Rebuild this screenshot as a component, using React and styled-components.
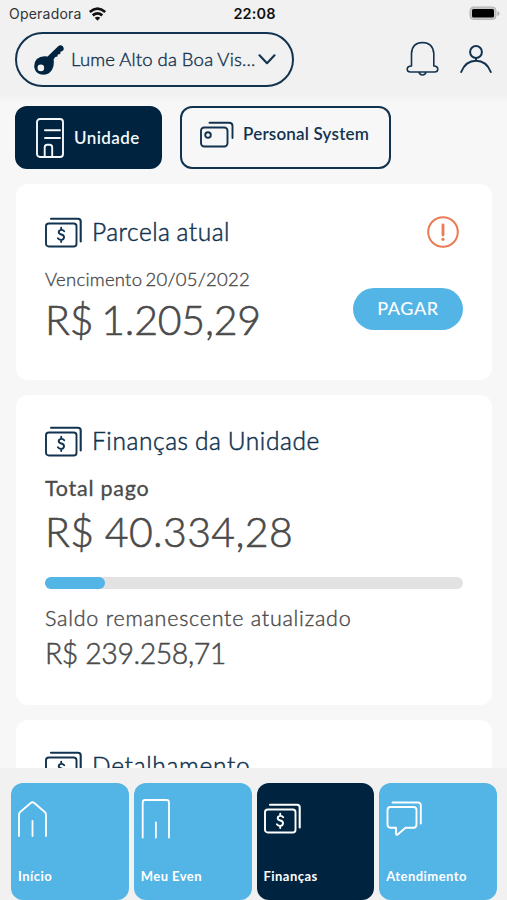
import styled, { createGlobalStyle } from "styled-components"

const navy = "#00233f"
const ink = "#12334f"
const blue = "#53b4e6"

const GlobalStyle = createGlobalStyle`
  * {
    box-sizing: border-box;
  }
  body {
    margin: 0;
    font-family: Lato, "Open Sans", sans-serif;
  }
  svg {
    display: block;
    flex: none;
    fill: none;
    stroke: currentColor;
    stroke-linecap: round;
    stroke-linejoin: round;
  }
`

const Screen = styled.div`
  width: 507px;
  height: 900px;
  display: flex;
  flex-direction: column;
  overflow: hidden;
  background: #f7f7f7;
  color: ${navy};
`

const StatusBar = styled.div`
  height: 27px;
  flex: none;
  display: grid;
  grid-template-columns: 1fr auto 1fr;
  align-items: center;
  padding: 0 7px 0 9px;
  background: #f1f1f1;
  color: #111;
  font-family: Inter, sans-serif;
  font-size: 14px;
`

const Carrier = styled.div`
  display: flex;
  align-items: center;
  gap: 6px;
  color: #333;
  letter-spacing: 0.22px;
`

const Clock = styled.div`
  font-weight: 600;
  font-size: 14.5px;
  letter-spacing: 0.1px;
`

const Battery = styled.div`
  justify-self: end;
`

const Header = styled.header`
  height: 68px;
  flex: none;
  display: flex;
  align-items: flex-start;
  padding: 5px 15px 0 15px;
  background: #f1f1f1;
`

const UnitSelect = styled.button`
  width: 279px;
  height: 55px;
  display: flex;
  align-items: center;
  padding: 0 0 0 17px;
  border: 2px solid ${ink};
  border-radius: 28px;
  background: transparent;
  color: ${ink};
  font-family: inherit;
`

const HeaderIcons = styled.div`
  margin: 9px 0 0 auto;
  display: flex;
  gap: 21px;
  color: ${ink};
`

const Label = styled.span`
  font-size: ${(p) => p.$size}px;
  font-weight: ${(p) => p.$weight || 400};
  letter-spacing: ${(p) => p.$spacing || 0}px;
  word-spacing: ${(p) => p.$words || 0}px;
  line-height: ${(p) => p.$line || 24}px;
  -webkit-text-stroke: ${(p) => p.$stroke || 0}px currentColor;
  white-space: nowrap;
`

const Content = styled.main`
  flex: 1;
  min-height: 0;
  overflow: hidden;
  display: flex;
  flex-direction: column;
  padding: 11px 15px 0 16px;
  background: linear-gradient(#f2f2f2, #f7f7f7 8px);
`

const Tabs = styled.div`
  display: flex;
  flex: none;
  gap: 18px;
  margin: 0 0 15px -1px;
`

const Tab = styled.button`
  width: ${(p) => p.$width}px;
  height: 63px;
  display: flex;
  align-items: center;
  gap: 9px;
  padding: 0 0 ${(p) => (p.$active ? 0 : 7)}px ${(p) => (p.$active ? 19 : 18)}px;
  border: 2px solid ${(p) => (p.$active ? navy : ink)};
  border-radius: 12px;
  background: ${(p) => (p.$active ? navy : "transparent")};
  color: ${(p) => (p.$active ? "#f4f8fb" : ink)};
  font-family: inherit;
`

const Card = styled.section`
  height: ${(p) => p.$height}px;
  flex: none;
  margin-bottom: 15px;
  padding: ${(p) => p.$top}px 29px 0;
  border-radius: 12px;
  background: #fff;
  color: #4a4a4a;
`

const CardTitle = styled.div`
  display: flex;
  align-items: center;
  height: 32px;
  gap: 10px;
  color: ${ink};
`

const Alert = styled.div`
  margin: 0 4px 0 auto;
  color: #e97b55;
`

const Stack = styled.div`
  display: flex;
  flex-direction: column;
  margin-top: ${(p) => p.$top || 0}px;
`

const Split = styled.div`
  display: flex;
  justify-content: space-between;
`

const PayButton = styled.button`
  width: 110px;
  height: 42px;
  margin-top: 40px;
  padding: 0 0 2px;
  border: 0;
  border-radius: 21px;
  background: ${blue};
  color: #fff;
  font-family: inherit;
`

const Track = styled.div`
  height: 12px;
  margin: 14px 0 17px;
  border-radius: 6px;
  background: #e2e2e2;
`

const Fill = styled.div`
  height: 12px;
  border-radius: 6px;
  background: ${blue};
`

const NavBar = styled.nav`
  height: 132px;
  flex: none;
  display: grid;
  grid-template-columns: repeat(4, 1fr);
  gap: 5px;
  padding: 15px 10px 0 11px;
  background: #f1f1f1;
`

const NavItem = styled.a`
  height: 117px;
  display: flex;
  flex-direction: column;
  justify-content: space-between;
  padding: 13px 0 12px 7px;
  border-radius: 12px;
  background: ${(p) => (p.$active ? navy : blue)};
  color: #fff;
`

const WifiIcon = () => (
  <svg width="19" height="14" viewBox="0 0 19 14" strokeWidth="2.7" color="#111">
    <path d="M1.8 5Q9.5 -1.6 17.2 5M4.7 8.4Q9.5 4.4 14.3 8.4" strokeLinecap="butt" />
    <path d="M6.7 10.8Q9.5 8.6 12.3 10.8L9.5 13.7Z" fill="#111" stroke="none" />
  </svg>
)

const BatteryIcon = () => (
  <svg width="31" height="15" viewBox="0 0 31 15" color="#b4b4b4">
    <rect x="1" y="1" width="26" height="12.5" rx="3.5" fill="#c8c8c8" />
    <rect x="3" y="3" width="22" height="8.5" rx="1.5" fill="#000" stroke="none" />
    <path d="M28.5 5v5q2-1 2-2.5t-2-2.5Z" fill="#aaa" stroke="none" />
  </svg>
)

const KeyIcon = () => (
  <svg width="30" height="30" viewBox="0 0 30 30">
    <path
      d="M13.6 11.6L24.2 1.2Q26.5 -.8 28.8 1.2Q30.6 3.6 29 5.6L27.6 6.6L26.6 6.6L26.2 9L23.8 9.4L23.4 11.6L21.2 12L19.6 14.6Q20.4 20 18.4 24Q15.8 29.5 9.6 29.8Q1.8 29.4 .4 23Q-.4 17.3 2.8 13.9Q7.4 10.2 13.6 11.6ZM6.8 19.6a3.3 3.3 0 1 0 .1 6.6a3.3 3.3 0 0 0-.1-6.6Z"
      fill={navy}
      fillRule="evenodd"
      stroke="none"
    />
  </svg>
)

const ChevronIcon = () => (
  <svg width="18" height="11" viewBox="0 0 18 11" strokeWidth="2.1">
    <path d="M1.5 1.3L9 9.2L16.5 1.3" />
  </svg>
)

const BellIcon = () => (
  <svg width="33" height="36" viewBox="0 0 33 36" strokeWidth="1.6">
    <path d="M5.5 25V12.5Q6 1.7 16.5 1.5Q27 1.7 27.8 12.5V25Q31.8 25.2 31.8 28.2Q31.8 31 28.5 31H4.5Q1.2 31 1.2 28.2Q1.2 25.2 5.5 25M13 31.2Q13.5 34 16.5 34T20 31.2" />
  </svg>
)

const UserIcon = () => (
  <svg width="32" height="34" viewBox="0 0 32 34" strokeWidth="2">
    <circle cx="16" cy="11" r="5.9" />
    <path d="M1.2 31C4.2 23.2 9.5 19.7 16 19.7S27.8 23.2 30.8 31M16 17v2.5" />
  </svg>
)

const BuildingIcon = () => (
  <svg width="29" height="40" viewBox="0 0 29 40" strokeWidth="1.9">
    <rect x="1" y="1" width="26" height="38" rx="3" />
    <path d="M9 12.3h15M9 20h15M8.7 39V29.5Q8.7 26.7 11.2 26.7H13.7Q16.2 26.7 16.2 29.5V39" />
  </svg>
)

const CardsIcon = () => (
  <svg width="34" height="27" viewBox="0 0 34 27" strokeWidth="1.9">
    <rect x="1" y="6.5" width="26.5" height="19" rx="3.2" />
    <circle cx="8" cy="14" r="2.8" />
    <path d="M9.5 1.8H29Q32.5 1.8 32.5 5V17" />
  </svg>
)

const MoneyIcon = () => (
  <svg width="37" height="31" viewBox="0 0 37 31" strokeWidth="1.9">
    <rect x="1" y="6.5" width="30.5" height="23" rx="2.8" />
    <path d="M6 1.8H33Q35.7 1.8 35.7 4.5V24.5" strokeWidth="2.1" />
    <path d="M19.2 14.2Q18.2 12.7 16.2 12.9Q13.7 13.3 13.7 15.2Q13.9 17 16.4 17.5Q19.2 18.2 19 20.4Q18.8 22.7 16.2 22.9Q14 22.8 12.9 21.2M16.2 10.7v2.2M16.2 23v2" />
  </svg>
)

const AlertIcon = () => (
  <svg width="32" height="32" viewBox="0 0 32 32" strokeWidth="2">
    <circle cx="16" cy="16" r="14.8" />
    <path d="M16 9v10" strokeWidth="2.8" />
    <circle cx="16" cy="23.3" r="1.6" fill="currentColor" stroke="none" />
  </svg>
)

const HomeIcon = () => (
  <svg width="29" height="42" viewBox="0 0 29 42" strokeWidth="1.8">
    <path d="M1 40V18.8Q1 17 2.2 16L12.7 7Q14.5 5.6 16.3 7L26.8 16Q28 17 28 18.8V40M14.5 25v15" />
  </svg>
)

const DoorIcon = () => (
  <svg width="29" height="44" viewBox="0 0 29 44" strokeWidth="1.8">
    <path d="M1.7 41.5V6.5Q1.7 4 4.2 4H25.5Q28 4 28 6.5V41.5M14.9 26.5v15" />
  </svg>
)

const ChatIcon = () => (
  <svg width="36" height="42" viewBox="0 0 36 42" strokeWidth="1.9">
    <path d="M4.5 11H27.5Q30.5 11 30.5 14V28.5Q30.5 31.7 27.5 31.7H19.5L11.7 38.5Q10 39.6 10 37.5V31.7H4.5Q1.5 31.7 1.5 28.5V14Q1.5 11 4.5 11Z" />
    <path d="M6.5 6.5H31.8Q34.8 6.5 34.8 9.5V27.5" />
  </svg>
)

const NavMoney = styled.div`
  padding-top: 7px;
`

const UnitName = styled(Label)`
  width: 187px;
  margin-left: 7px;
  padding-bottom: 2px;
  text-align: left;
`

const navItems = [
  { name: "Início", icon: <HomeIcon /> },
  { name: "Meu Even", icon: <DoorIcon /> },
  { name: "Finanças", icon: <NavMoney><MoneyIcon /></NavMoney>, active: true },
  { name: "Atendimento", icon: <ChatIcon /> },
]

const Title = ({ children, spacing }) => (
  <Label $size={24.5} $weight={300} $stroke={0.5} $spacing={spacing} $words={-1} $line={30}>
    {children}
  </Label>
)

const App = () => {
  return (
    <>
      <GlobalStyle />
      <Screen>
        <StatusBar>
          <Carrier>
            Operadora
            <WifiIcon />
          </Carrier>
          <Clock>22:08</Clock>
          <Battery>
            <BatteryIcon />
          </Battery>
        </StatusBar>
        <Header>
          <UnitSelect>
            <KeyIcon />
            <UnitName $size={18.5} $weight={300} $stroke={0.4} $spacing={0.2} $words={-0.5}>Lume Alto da Boa Vis...</UnitName>
            <ChevronIcon />
          </UnitSelect>
          <HeaderIcons>
            <BellIcon />
            <UserIcon />
          </HeaderIcons>
        </Header>
        <Content>
          <Tabs>
            <Tab $active $width={147}>
              <BuildingIcon />
              <Label $size={17} $weight={600} $spacing={0.4}>Unidade</Label>
            </Tab>
            <Tab $width={211}>
              <CardsIcon />
              <Label $size={17} $weight={600} $spacing={0.2}>Personal System</Label>
            </Tab>
          </Tabs>
          <Card $height={196} $top={32}>
            <CardTitle>
              <MoneyIcon />
              <Title spacing={0.5}>Parcela atual</Title>
              <Alert>
                <AlertIcon />
              </Alert>
            </CardTitle>
            <Split>
              <Stack $top={19}>
                <Label $size={18.5} $weight={300} $stroke={0.35} $spacing={0.25} $words={-2}>Vencimento 20/05/2022</Label>
                <Label $size={41} $line={58} $weight={300} $stroke={0.6} $words={-3} $spacing={-0.2}>R$ 1.205,29</Label>
              </Stack>
              <PayButton>
                <Label $size={18} $weight={500} $spacing={0.6}>PAGAR</Label>
              </PayButton>
            </Split>
          </Card>
          <Card $height={310} $top={30}>
            <CardTitle>
              <MoneyIcon />
              <Title spacing={0.6}>Finanças da Unidade</Title>
            </CardTitle>
            <Stack $top={19}>
              <Label $size={21.5} $stroke={0.3} $spacing={0.75}>Total pago</Label>
              <Label $size={41} $line={63} $weight={300} $stroke={0.6} $words={-1} $spacing={0.35}>R$ 40.334,28</Label>
            </Stack>
            <Track>
              <Fill style={{ width: "14.4%" }} />
            </Track>
            <Stack>
              <Label $size={21.5} $weight={300} $stroke={0.4} $spacing={0.75}>Saldo remanescente atualizado</Label>
              <Label $size={28.5} $line={46} $weight={300} $stroke={0.5} $spacing={-0.45}>R$ 239.258,71</Label>
            </Stack>
          </Card>
          <Card $height={196} $top={30}>
            <CardTitle>
              <MoneyIcon />
              <Title spacing={0.7}>Detalhamento</Title>
            </CardTitle>
          </Card>
        </Content>
        <NavBar>
          {navItems.map((item) => (
            <NavItem key={item.name} $active={item.active}>
              {item.icon}
              <Label $size={13} $weight={700} $spacing={0.45}>{item.name}</Label>
            </NavItem>
          ))}
        </NavBar>
      </Screen>
    </>
  )
}

export default App
